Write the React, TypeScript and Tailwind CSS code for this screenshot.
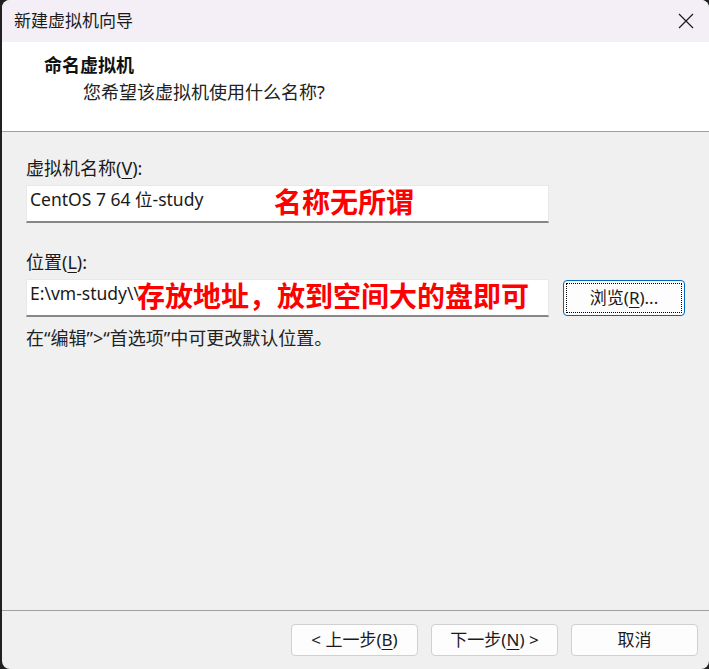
const ui = '"Noto Sans", "Noto Sans CJK SC", sans-serif';

function Mn({ c }: { c: string }) {
  return <span className="underline underline-offset-[3px] decoration-1">{c}</span>;
}

function WizardButton({ children }: { children: React.ReactNode }) {
  return (
    <button className="w-[127px] h-[32px] rounded-[4px] border border-[#d0d0d0] bg-[#fdfdfd] text-[17px] text-[#1a1a1a] flex items-center justify-center">
      {children}
    </button>
  );
}

export default function App() {
  return (
    <div className="w-[709px] h-[669px] bg-[#202020]" style={{ fontFamily: ui }}>
      <div className="ml-[2px] h-full rounded-[8px] overflow-hidden flex flex-col bg-[#f0f0f0]">
        {/* Title bar */}
        <div className="h-[42px] bg-[#f4eff6] flex items-center justify-between">
          <span className="pl-[12px] text-[17px] text-[#1a1a1a]">新建虚拟机向导</span>
          <div className="w-[46px] h-full flex items-center justify-center">
            <svg width="16" height="16" viewBox="0 0 16 16" fill="none" stroke="#1a1a1a" strokeWidth="1.2">
              <path d="M1 1L15 15M15 1L1 15" />
            </svg>
          </div>
        </div>

        {/* Header */}
        <div className="h-[90px] bg-white border-b border-[#a0a0a0] pl-[42px] pt-[11px]">
          <div className="text-[18px] leading-[24px] font-bold text-[#111]">命名虚拟机</div>
          <div className="mt-[3px] ml-[39px] text-[18px] leading-[24px] text-[#222]">
            您希望该虚拟机使用什么名称?
          </div>
        </div>

        {/* Body */}
        <div className="flex-1 px-[24px] pt-[24px] text-[#1a1a1a]">
          <div className="text-[18px] leading-[24px]">
            虚拟机名称(<Mn c="V" />):
          </div>
          <div className="relative mt-[5px] w-[523px] h-[38px] bg-white border border-[#e8e8e8] border-b-2 border-b-[#868686] flex items-center pl-[3px] pb-[9px] text-[17.5px]">
            CentOS 7 64 位-study
            <span className="absolute left-[247px] top-[-3px] text-[28px] leading-[38px] font-bold text-[#ff0000] [text-shadow:0_0_1px_#fff,0_0_2px_#fff]">
              名称无所谓
            </span>
          </div>

          <div className="mt-[27px] text-[18px] leading-[24px]">
            位置(<Mn c="L" />):
          </div>
          <div className="mt-[5px] flex items-center gap-[14px]">
            <div className="relative w-[523px] h-[38px] bg-white border border-[#e8e8e8] border-b-2 border-b-[#868686] flex items-center pl-[3px] pb-[9px] text-[17.5px]">
              E:\vm-study\\
              <span className="absolute left-[110px] top-[-3px] text-[28px] leading-[38px] font-bold text-[#ff0000] [text-shadow:0_0_1px_#fff,0_0_2px_#fff,0_0_3px_#fff]">
                存放地址，放到空间大的盘即可
              </span>
            </div>
            <button className="w-[122px] h-[36px] rounded-[4px] border border-[#0067c0] bg-[#fdfdfd] p-[2px]">
              <div className="w-full h-full border border-dotted border-black flex items-center justify-center text-[17px] text-[#1a1a1a]">
                浏览(<Mn c="R" />)...
              </div>
            </button>
          </div>

          <div className="mt-[9px] text-[18px] leading-[24px] text-[#222]">
            在“编辑”&gt;“首选项”中可更改默认位置。
          </div>
        </div>

        {/* Footer */}
        <div className="h-[59px] border-t border-[#a0a0a0] flex items-start justify-end gap-[13px] pt-[13px] pr-[11px]">
          <WizardButton>
            &lt; 上一步(<Mn c="B" />)
          </WizardButton>
          <WizardButton>
            下一步(<Mn c="N" />) &gt;
          </WizardButton>
          <WizardButton>取消</WizardButton>
        </div>
      </div>
    </div>
  );
}
